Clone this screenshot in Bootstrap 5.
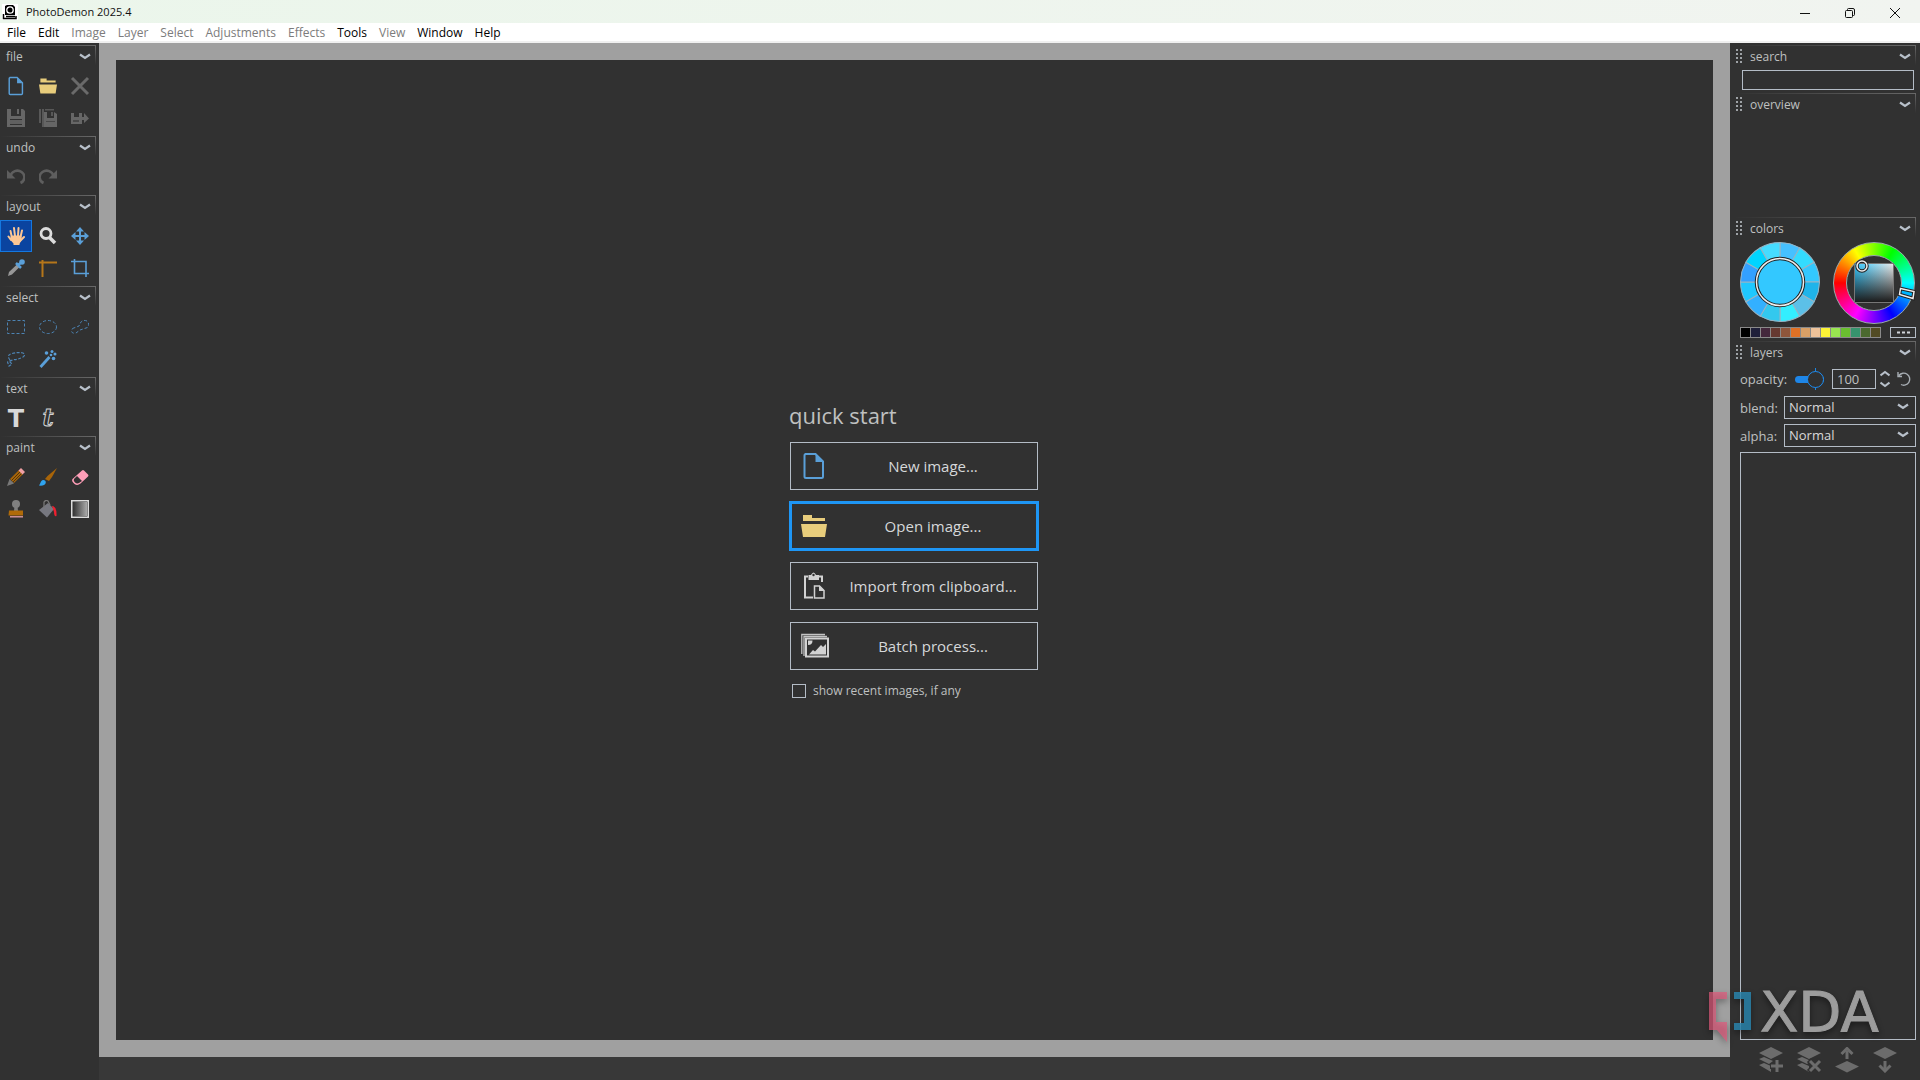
<!DOCTYPE html>
<html lang="en">
<head>
<meta charset="utf-8">
<meta name="viewport" content="width=device-width, initial-scale=1">
<title>PhotoDemon 2025.4</title>
<link rel="stylesheet" href="https://cdn.jsdelivr.net/npm/bootstrap@5.3.0/dist/css/bootstrap.min.css">
<style>
:root { --panel:#313131; --line:#b4bcc6; --txt:#bfc0c0; --accent:#1e96f5; }
body { font-family:"Open Sans","Noto Sans",sans-serif; font-size:12px; line-height:16px; background:#313131; color:var(--txt); overflow:hidden; }
button, input, select { font-family:inherit; color:inherit; }
.titlebar { height:23px; background:linear-gradient(90deg,#ebf6eb,#f1f4f0); color:#111; padding:0 3px 0 2px; font-size:11px; }
.wbtn { width:45px; height:23px; border:0; background:none; padding:0; color:#111; }
.menubar { height:20px; background:#fff; border-bottom:2px solid #f0f0f0; padding-left:1px; }
.menubar a { color:#000; text-decoration:none; padding:0 6px; line-height:19px; }
.menubar a.off { color:#7c7c7c; }
.tools { width:99px; background:var(--panel); padding-top:2px; }
.sect { margin-bottom:2px; }
.head { height:25px; position:relative; padding:4px 5px 0 6px; }
.head::before, .head::after { content:""; position:absolute; top:0; right:0; }
.head::before { left:0; height:1px; background:linear-gradient(90deg,transparent,#686868); }
.head::after { width:1px; height:20px; background:linear-gradient(#686868,transparent); }
.tools .head { margin-right:3px; }
.head h2 { font-size:12px; line-height:16px; margin:0; font-weight:400; }
.fold { border:0; background:none; padding:0; width:12px; height:16px; line-height:0; }
.tool { width:32px; height:32px; border:1px solid transparent; background:none; padding:0; line-height:0; }
.tool.on { background:#0a44a0; border-color:#1478e0; }
.work { background:#a0a0a0; padding:17px; }
.sheet { background:#313131; }
.status { height:23px; background:#383838; }
.side { width:190px; background:var(--panel); padding-top:2px; }
.side .head { margin:0 4px 0 4px; padding-left:2px; }
.side .head h2 { margin-left:8px; }
.inset { margin:0 4px 0 10px; }
.fld { background:transparent; border:1px solid var(--line); border-radius:0; outline:0; padding:0 4px; }
.find { height:20px; margin:0 6px 3px 12px; }
.overview { height:99px; }
.wheels { height:85px; }
.ring { width:82px; height:82px; border-radius:50%; background:conic-gradient(from 270deg,#f00,#ff0,#0f0,#0ff,#00f,#f0f,#f00); border:1px solid #9aa; position:relative; margin-right:1px; }
.hole { width:56px; height:56px; border-radius:50%; background:var(--panel); border:1px solid #9aa; }
.shade { width:40px; height:40px; border:1px solid #777; background:linear-gradient(transparent,#1c1c1c),linear-gradient(90deg,#33c8ff,#e8e8e8); }
.ring svg { position:absolute; inset:-1px; overflow:visible; }
.paletterow { margin-bottom:3px; }
.chips { width:141px; height:11px; background:#8a8a8a; padding:1px; gap:1px; }
.chips button { border:0; padding:0; flex:1; }
.more { width:26px; height:11px; border:1px solid var(--line); background:none; padding:0; }
.lab { font-size:13px; line-height:20px; }
.opac { height:26px; margin-bottom:4px; }
.opac .lab { width:55px; }
.opac input[type=range] { appearance:none; -webkit-appearance:none; width:29px; height:22px; margin:0 8px 0 0; padding:0; background:linear-gradient(#1e86e0,#1e86e0) 20px 0/1px 22px no-repeat; }
.opac input[type=range]::-webkit-slider-runnable-track { height:7px; border-radius:4px; background:#1e86e8; }
.opac input[type=range]::-webkit-slider-thumb { -webkit-appearance:none; width:17px; height:17px; margin-top:-5px; border-radius:50%; background:var(--panel); border:1px solid #1e8cf0; }
.num { width:44px; height:20px; font-size:13px; margin-right:4px; }
.bare { border:0; background:none; padding:0; line-height:0; }
.step { margin-right:7px; }
.pick { width:132px; height:23px; appearance:none; -webkit-appearance:none; font-size:13px; line-height:18px; color:#d8d8d8; padding-bottom:2px; }
.pickwrap { position:relative; }
.pickwrap svg { position:absolute; right:7px; top:6px; pointer-events:none; }
.mode { height:23px; margin-bottom:5px; }
.stack { border:1px solid var(--line); }
.layerbar { height:40px; padding:7px 22px 0 28px; }
.start { width:250px; margin:0 1px 2px 0; }
.start h1 { font-size:22px; line-height:32px; font-weight:400; margin:0 0 11px; color:var(--txt); }
.go { height:48px; border:1px solid var(--line); background:none; color:#d6d8da; font-size:15px; line-height:20px; margin:0 1px 12px; padding:0 0 0 8px; }
.go span { flex:1; }
.go.hot { outline:2px solid var(--accent); outline-offset:-1px; border-color:var(--accent); box-shadow:inset 0 0 0 1px var(--accent); }
.recent { margin:1px 0 0 3px; gap:7px; }
.recent input { appearance:none; -webkit-appearance:none; width:14px; height:14px; border:1px solid var(--line); margin:0; background:none; }
.brand { position:absolute; right:20px; bottom:20px; pointer-events:none; filter:drop-shadow(0 3px 3px rgba(0,0,0,.45)); }
</style>
<script src="https://cdn.jsdelivr.net/npm/bootstrap@5.3.0/dist/js/bootstrap.bundle.min.js"></script>
</head>
<body class="vh-100 d-flex flex-column">
<svg width="0" height="0" class="position-absolute" aria-hidden="true">
 <defs>
  <symbol id="chev" viewBox="0 0 12 8"><path d="M1 1.500 6 5 11 1.500" fill="none" stroke="#b8c0ca" stroke-width="2.200"/></symbol>
  <symbol id="doc" viewBox="0 0 24 28"><path d="M3 2H13.500L21 9.500V24.500Q21 26 19.500 26H4Q2.500 26 2.500 24.500V3.500Q2.500 2 4 2Z" fill="none" stroke="#5a9fd8" stroke-width="2"/><path d="M13.500 2 21.500 10H13.500Z" fill="#5a9fd8"/></symbol>
  <symbol id="fold" viewBox="0 0 26 22"><path d="M2 0H11V3H24V6H2ZM0 9H26L24 22H2Z" fill="#e8cd7c"/></symbol>
  <symbol id="grip" viewBox="0 0 6 14"><path d="M1 0V14M5 0V14" stroke="#9ea2a6" stroke-width="2" stroke-dasharray="2 2"/></symbol>
  <symbol id="sheets" viewBox="0 0 26 26"><path d="M1 6 13 0 25 6 13 12Z" fill="#6c6c6c"/><path d="M1 12 6 10 15 14 11 17ZM1 18 6 16 13 19V25Z" fill="#6c6c6c"/></symbol>
 </defs>
</svg>

<header>
 <div class="titlebar d-flex align-items-center">
  <svg width="16" height="16" viewBox="0 0 16 16"><rect width="16" height="16" fill="#fff"/><path d="M3 2 5 1H11L13 3V11H3Z" fill="#000"/><circle cx="8" cy="6" r="3.200" fill="none" stroke="#fff" stroke-width="1.300"/><path d="M1.500 10V14.500H14V12M4 12.500H13" fill="none" stroke="#000" stroke-width="1.500"/></svg>
  <span class="ms-1 ps-1 flex-grow-1">PhotoDemon 2025.4</span>
  <button class="wbtn" aria-label="Minimize"><svg width="10" height="10"><path d="M0 5.500H10" stroke="#111"/></svg></button>
  <button class="wbtn" aria-label="Restore"><svg width="10" height="10" fill="none" stroke="#111"><rect x=".5" y="2.500" width="7" height="7" rx="1"/><path d="M2.500 2V1.500Q2.500.5 3.500.5H8Q9.500.5 9.500 2V6.500Q9.500 7.500 8.500 7.500H8"/></svg></button>
  <button class="wbtn" aria-label="Close"><svg width="10" height="10"><path d="M0 0 10 10M10 0 0 10" stroke="#111"/></svg></button>
 </div>
 <nav class="menubar d-flex">
  <a href="#">File</a><a href="#">Edit</a><a href="#" class="off">Image</a><a href="#" class="off">Layer</a><a href="#" class="off">Select</a><a href="#" class="off">Adjustments</a><a href="#" class="off">Effects</a><a href="#">Tools</a><a href="#" class="off">View</a><a href="#">Window</a><a href="#">Help</a>
 </nav>
</header>

<div class="d-flex flex-grow-1 position-relative">
 <aside class="tools flex-shrink-0">
  <section class="sect">
   <div class="head d-flex justify-content-between"><h2>file</h2><button class="fold" aria-label="Toggle file"><svg width="12" height="8"><use href="#chev"/></svg></button></div>
   <div class="d-flex flex-wrap">
    <button class="tool" aria-label="New"><svg width="18" height="20"><use href="#doc"/></svg></button>
    <button class="tool" aria-label="Open"><svg width="18" height="16"><use href="#fold"/></svg></button>
    <button class="tool" aria-label="Close image"><svg width="20" height="20"><path d="M2 2 18 18M18 2 2 18" stroke="#6a6a6a" stroke-width="3"/></svg></button>
    <button class="tool" aria-label="Save"><svg width="18" height="18"><path d="M0 0H4V7H14V0H16L18 2V18H0ZM3 10V16H15V10Z" fill="#666" fill-rule="evenodd"/><path d="M3 11H15V15H3Z" fill="#606060"/><path d="M10 0H12V5H10Z" fill="#666"/></svg></button>
    <button class="tool" aria-label="Save copy"><svg width="18" height="18"><path d="M0 0H2V14H0ZM3 0H5V18H3Z" fill="#585858"/><path d="M5 3H8V9H15V3L18 5V18H5Z" fill="#666"/><path d="M7 12H16V13H7Z" fill="#484848"/><path d="M12 3H14V7H12ZM6 0H15V1.500H6Z" fill="#585858"/></svg></button>
    <button class="tool" aria-label="Export"><svg width="18" height="18"><path d="M0 4H3V8H8V4H11V8H13V4L18 9.500 13 14V11H11V15H0Z" fill="#666"/><path d="M2 11H8V13H2Z" fill="#484848"/></svg></button>
   </div>
  </section>
  <section class="sect">
   <div class="head d-flex justify-content-between"><h2>undo</h2><button class="fold" aria-label="Toggle undo"><svg width="12" height="8"><use href="#chev"/></svg></button></div>
   <div class="d-flex flex-wrap">
    <button class="tool" aria-label="Undo"><svg width="18" height="16"><path d="M3.500 7A7 6.500 0 1 1 13.500 14" fill="none" stroke="#5e5e5e" stroke-width="2.600"/><path d="M0 1V9.500H8.500Z" fill="#5e5e5e"/></svg></button>
    <button class="tool" aria-label="Redo"><svg width="18" height="16"><path d="M14.500 7A7 6.500 0 1 0 4.500 14" fill="none" stroke="#5e5e5e" stroke-width="2.600"/><path d="M18 1V9.500H9.500Z" fill="#5e5e5e"/></svg></button>
   </div>
  </section>
  <section class="sect">
   <div class="head d-flex justify-content-between"><h2>layout</h2><button class="fold" aria-label="Toggle layout"><svg width="12" height="8"><use href="#chev"/></svg></button></div>
   <div class="d-flex flex-wrap">
    <button class="tool on" aria-label="Hand"><svg width="18" height="20"><path d="M5 12 3.500 5M8 10 7 2M11 10 11.500 2M13.500 11 15 4.500M4 14 1.500 10.500M13 15 17 11" stroke="#fdc794" stroke-width="2" stroke-linecap="round"/><path d="M4 9.500H14.500V14L12.500 18V19H6.500V17.500L3 13.500Z" fill="#fdc794"/></svg></button>
    <button class="tool" aria-label="Zoom"><svg width="18" height="18"><circle cx="7" cy="6.500" r="5" fill="none" stroke="#dcdcdc" stroke-width="2.800"/><path d="M10.500 10.500 16 16" stroke="#dcdcdc" stroke-width="3.500"/></svg></button>
    <button class="tool" aria-label="Move"><svg width="18" height="18"><path d="M9 2V16M2 9H16" stroke="#5a9fd8" stroke-width="2"/><path d="M9 0 13 4.500H5ZM9 18 13 13.500H5ZM0 9 4.500 5V13ZM18 9 13.500 5V13Z" fill="#5a9fd8"/></svg></button>
    <button class="tool" aria-label="Color picker"><svg width="18" height="18"><path d="M1 17 2 13 10 5.500 12.500 8 5 15.500Z" fill="#979797"/><path d="M9 4 14 9M11 6 15.500 2.500" stroke="#5a9fd8" stroke-width="2.500"/><circle cx="15" cy="3" r="2.800" fill="#5a9fd8"/></svg></button>
    <button class="tool" aria-label="Measure"><svg width="18" height="18"><path d="M0 3.500H18M3.500 1V18" stroke="#b5761a" stroke-width="2"/></svg></button>
    <button class="tool" aria-label="Crop"><svg width="18" height="18" fill="none" stroke="#5a9fd8" stroke-width="1.600"><path d="M3.500 0V14.500H18M0 2.500H15V18"/></svg></button>
   </div>
  </section>
  <section class="sect">
   <div class="head d-flex justify-content-between"><h2>select</h2><button class="fold" aria-label="Toggle select"><svg width="12" height="8"><use href="#chev"/></svg></button></div>
   <div class="d-flex flex-wrap">
    <button class="tool" aria-label="Rectangle"><svg width="18" height="16"><rect x=".5" y="1.500" width="17" height="13" fill="none" stroke="#4d84b4" stroke-dasharray="3 2"/></svg></button>
    <button class="tool" aria-label="Ellipse"><svg width="18" height="16"><ellipse cx="9" cy="8" rx="8.500" ry="6.500" fill="none" stroke="#4d84b4" stroke-dasharray="3 2"/></svg></button>
    <button class="tool" aria-label="Polygon"><svg width="18" height="16"><path d="M1.500 9.500 8 7 10 3Q12 .5 16 2 19 5 16.500 8.500L9 11 5 14Q1 15 .5 12Z" fill="none" stroke="#4d84b4" stroke-dasharray="3 2"/></svg></button>
    <button class="tool" aria-label="Lasso"><svg width="18" height="16"><path d="M3 9Q-1 4 5 2.500T16 2Q19 4 16 6 10 9 7 8.500L2 10 5 13 2 15 .5 11 6 9" fill="none" stroke="#4d84b4" stroke-width="1.200" stroke-dasharray="3 1.500"/></svg></button>
    <button class="tool" aria-label="Wand"><svg width="18" height="18"><path d="M1.500 17 10.500 7" stroke="#5a9fd8" stroke-width="2.800"/><g fill="#5a9fd8"><circle cx="7.500" cy="3" r="1.800"/><circle cx="13" cy="1.500" r="1.500"/><circle cx="12" cy="5" r="1.300"/><circle cx="16" cy="4" r="1.500"/><circle cx="14.500" cy="8.500" r="1.800"/></g></svg></button>
   </div>
  </section>
  <section class="sect">
   <div class="head d-flex justify-content-between"><h2>text</h2><button class="fold" aria-label="Toggle text"><svg width="12" height="8"><use href="#chev"/></svg></button></div>
   <div class="d-flex flex-wrap">
    <button class="tool" aria-label="Basic text"><svg width="30" height="30"><text x="15" y="24" text-anchor="middle" font-family="DejaVu Sans" font-weight="700" font-size="24" fill="#d8d8d8">T</text></svg></button>
    <button class="tool" aria-label="Typography"><svg width="30" height="30"><text x="15" y="23" text-anchor="middle" font-family="DejaVu Serif" font-style="italic" font-weight="700" font-size="24" fill="#313131" stroke="#d0d0d0">t</text></svg></button>
   </div>
  </section>
  <section class="sect">
   <div class="head d-flex justify-content-between"><h2>paint</h2><button class="fold" aria-label="Toggle paint"><svg width="12" height="8"><use href="#chev"/></svg></button></div>
   <div class="d-flex flex-wrap">
    <button class="tool" aria-label="Pencil"><svg width="18" height="18"><path d="M3 11 12 2 16 6 7 15Z" fill="#a86408"/><path d="M4.500 12.500 13 4M6 14 15 5" stroke="#3a2a10" stroke-width=".8"/><path d="M0 18 2.500 11 7 15.500Z" fill="#777"/><path d="M11.500 2.500 14 0 18 4 15.500 6.500Z" fill="#f0a0a4"/></svg></button>
    <button class="tool" aria-label="Brush"><svg width="18" height="18"><path d="M18 0 13 9 10 13 6 11 8.500 8Z" fill="#a86408"/><path d="M0 17.500Q1 16 2 13.500 4 11 6.500 13 7.500 15.500 5 17 3 18 0 17.500Z" fill="#2fa4f0"/></svg></button>
    <button class="tool" aria-label="Eraser"><svg width="18" height="18"><path d="M11 2.500Q12 1.500 13 2.500L17 6.500Q18 7.500 17 8.500L9.500 15.500Q6.500 18 3.500 16 0 13 1.500 11Z" fill="#ff9eb8"/><path d="M6 8 11 13 8 15Q6 16 4 14.500 2 12.500 3 11Z" fill="#313131"/></svg></button>
    <button class="tool" aria-label="Clone"><svg width="18" height="18"><circle cx="9" cy="4" r="4" fill="#808080"/><path d="M7.500 6H10.500L11 11H7Z" fill="#808080"/><path d="M2 10.500H16V15.500H1.500Z" fill="#b06a08"/><path d="M3 16.800H16" stroke="#e8a0a8" stroke-width="1.300"/></svg></button>
    <button class="tool" aria-label="Fill"><svg width="18" height="18"><path d="M0 10 9 3 15 9 8 17.500Z" fill="#777880"/><path d="M5 8V2Q6.500-.5 9 1L11 5" fill="none" stroke="#777" stroke-width="1.300"/><path d="M13 6Q18 6.500 17.500 16 15 17 15 12Z" fill="#ee2030"/></svg></button>
    <button class="tool" aria-label="Gradient"><svg width="18" height="18"><defs><linearGradient id="gr"><stop stop-color="#333"/><stop offset="1" stop-color="#aaa"/></linearGradient></defs><rect x=".75" y=".75" width="16.500" height="16.500" fill="#313131" stroke="#dcdcdc" stroke-width="1.500"/><rect x="2" y="2" width="14" height="14" fill="url(#gr)"/></svg></button>
   </div>
  </section>
 </aside>

 <div class="flex-grow-1 d-flex flex-column">
  <main class="work flex-grow-1 d-flex">
   <div class="sheet flex-grow-1 d-flex align-items-center justify-content-center">
    <div class="start d-flex flex-column">
     <h1>quick start</h1>
     <button class="go d-flex align-items-center"><svg width="30" height="28" viewBox="-3 0 30 28"><use href="#doc" width="24" height="28"/></svg><span>New image...</span></button>
     <button class="go hot d-flex align-items-center"><svg width="30" height="22" viewBox="-2 0 30 22"><use href="#fold" width="26" height="22"/></svg><span>Open image...</span></button>
     <button class="go d-flex align-items-center"><svg width="30" height="28" viewBox="-3 0 30 28"><path d="M11 25.500H3V4.500H6M17 4.500H20V10" fill="none" stroke="#d2d2d2" stroke-width="2"/><path d="M6.500 3H9Q11.500-2 14 3H17V8H6.500Z" fill="#d2d2d2"/><circle cx="11.500" cy="3" r="1.200" fill="#313131"/><path d="M12.500 14H17.500L22 18.500V26H12.500Z" fill="#313131" stroke="#d2d2d2" stroke-width="1.500"/><path d="M17 13.500 22.500 19H17Z" fill="#d2d2d2"/></svg><span>Import from clipboard...</span></button>
     <button class="go d-flex align-items-center"><svg width="30" height="28" viewBox="-2 0 30 28"><path d="M.8 22V2.500H24M3 24V4.500H26" fill="none" stroke="#c4c4c4" stroke-width="1.300"/><rect x="5" y="6.500" width="22" height="18" fill="#313131" stroke="#d2d2d2" stroke-width="2"/><path d="M8 22.500 12 18 14 19.500 20 13 22 15 25 12V22.500Z" fill="#d2d2d2"/><path d="M7 8.500H11.500Q11.500 13 7 13Z" fill="#d2d2d2"/></svg><span>Batch process...</span></button>
     <label class="recent d-flex align-items-center"><input type="checkbox">show recent images, if any</label>
    </div>
   </div>
  </main>
  <footer class="status"></footer>
 </div>

 <aside class="side flex-shrink-0 d-flex flex-column">
  <div class="head d-flex"><svg width="6" height="14"><use href="#grip"/></svg><h2 class="flex-grow-1">search</h2><button class="fold" aria-label="Toggle search"><svg width="12" height="8"><use href="#chev"/></svg></button></div>
  <input class="fld find" type="text" aria-label="search">
  <div class="head d-flex"><svg width="6" height="14"><use href="#grip"/></svg><h2 class="flex-grow-1">overview</h2><button class="fold" aria-label="Toggle overview"><svg width="12" height="8"><use href="#chev"/></svg></button></div>
  <div class="overview"></div>
  <div class="head d-flex"><svg width="6" height="14"><use href="#grip"/></svg><h2 class="flex-grow-1">colors</h2><button class="fold" aria-label="Toggle colors"><svg width="12" height="8"><use href="#chev"/></svg></button></div>
  <div class="inset wheels d-flex justify-content-between align-items-start">
   <svg width="80" height="80" viewBox="-40 -40 80 80" class="flex-shrink-0">
    <defs><path id="wedge" d="M0 0V-39.500A39.500 39.500 0 0 1 19.750-34.200Z" stroke="#98b4c4"/></defs>
    <use href="#wedge" fill="#46c0ff"/><use href="#wedge" fill="#33dcff" transform="rotate(30)"/><use href="#wedge" fill="#33c8ff" transform="rotate(60)"/><use href="#wedge" fill="#1fb4ea" transform="rotate(90)"/><use href="#wedge" fill="#5cc0e8" transform="rotate(120)"/><use href="#wedge" fill="#33eeff" transform="rotate(150)"/><use href="#wedge" fill="#33c8ee" transform="rotate(180)"/><use href="#wedge" fill="#33b0ff" transform="rotate(210)"/><use href="#wedge" fill="#1fc8ff" transform="rotate(240)"/><use href="#wedge" fill="#33a0ff" transform="rotate(270)"/><use href="#wedge" fill="#00d4ff" transform="rotate(300)"/><use href="#wedge" fill="#46dcff" transform="rotate(330)"/>
    <circle r="23.500" fill="#33c8ff" stroke="#222" stroke-width="3.500"/><circle r="23.500" fill="none" stroke="#eee" stroke-width="1.500"/>
   </svg>
   <div class="ring d-flex align-items-center justify-content-center flex-shrink-0">
    <div class="hole d-flex align-items-center justify-content-center"><div class="shade"></div></div>
    <svg width="82" height="82"><circle cx="29" cy="24" r="5" fill="none" stroke="#222" stroke-width="3.500"/><circle cx="29" cy="24" r="5" fill="none" stroke="#eee" stroke-width="1.500"/><path d="M67.500 46.500 81 49.500 80 56.500 66.500 52.500Z" fill="none" stroke="#222" stroke-width="3.500"/><path d="M67.500 46.500 81 49.500 80 56.500 66.500 52.500Z" fill="none" stroke="#eee" stroke-width="1.500"/></svg>
   </div>
  </div>
  <div class="inset paletterow d-flex justify-content-between">
   <div class="chips d-flex" id="chips"></div>
   <button class="more d-flex align-items-center justify-content-center" aria-label="More palettes"><svg width="13" height="3"><path d="M0 1.500H3M5 1.500H8M10 1.500H13" stroke="#d0d4da" stroke-width="2"/></svg></button>
  </div>
  <div class="head d-flex"><svg width="6" height="14"><use href="#grip"/></svg><h2 class="flex-grow-1">layers</h2><button class="fold" aria-label="Toggle layers"><svg width="12" height="8"><use href="#chev"/></svg></button></div>
  <div class="inset opac d-flex align-items-center">
   <label class="lab" for="op">opacity:</label>
   <input type="range" id="op" min="0" max="100" value="100">
   <input class="fld num" type="text" value="100" aria-label="Opacity value">
   <button class="bare step" aria-label="Step"><svg width="10" height="18" fill="none" stroke="#b8c0ca" stroke-width="2"><path d="M.5 5.500 5 2 9.500 5.500M.5 12.500 5 16 9.500 12.500"/></svg></button>
   <button class="bare" aria-label="Reset"><svg width="14" height="16" fill="none" stroke="#a8aeb4" stroke-width="1.400"><path d="M2 4.500A6 6 0 1 1 4 13.500M1 1V5.500H5"/></svg></button>
  </div>
  <div class="inset mode d-flex align-items-center justify-content-between"><label class="lab" for="bl">blend:</label><div class="pickwrap"><select class="fld pick" id="bl"><option>Normal</option></select><svg width="12" height="10" viewBox="0 0 12 8"><use href="#chev"/></svg></div></div>
  <div class="inset mode d-flex align-items-center justify-content-between"><label class="lab" for="al">alpha:</label><div class="pickwrap"><select class="fld pick" id="al"><option>Normal</option></select><svg width="12" height="10" viewBox="0 0 12 8"><use href="#chev"/></svg></div></div>
  <div class="inset stack flex-grow-1"></div>
  <div class="layerbar d-flex justify-content-between align-items-start">
   <button class="bare" aria-label="Add layer"><svg width="26" height="26"><use href="#sheets"/><path d="M19 12V26M12 19H26" stroke="#313131" stroke-width="6"/><path d="M19 13V25M13 19H25" stroke="#6c6c6c" stroke-width="3"/></svg></button>
   <button class="bare" aria-label="Delete layer"><svg width="26" height="26"><use href="#sheets"/><path d="M13 13 25 25M25 13 13 25" stroke="#313131" stroke-width="6"/><path d="M14 14 24 24M24 14 14 24" stroke="#6c6c6c" stroke-width="3"/></svg></button>
   <button class="bare" aria-label="Raise layer"><svg width="26" height="26"><path d="M1 19.500 13 14 25 19.500 13 25.500ZM11.500 4H14.500V12H11.500Z" fill="#6c6c6c"/><path d="M7.500 7 13 1.500 18.500 7" fill="none" stroke="#6c6c6c" stroke-width="3"/></svg></button>
   <button class="bare" aria-label="Lower layer"><svg width="26" height="26"><path d="M1 6 13 0 25 6 13 12ZM11.500 14H14.500V23H11.500Z" fill="#6c6c6c"/><path d="M7.500 18.500 13 24 18.500 18.500" fill="none" stroke="#6c6c6c" stroke-width="3"/></svg></button>
  </div>
 </aside>

 <svg class="brand" width="192" height="84" viewBox="0 -14 192 84" aria-label="XDA">
  <path d="M1 2H19V9H8V32H19V52L9 40H1Z" fill="#e0587a" opacity=".7"/>
  <path d="M26 2H43V40H26V33H36V9H26Z" fill="#2a86b0" opacity=".82"/>
  <text x="52" y="41" font-family="DejaVu Sans" font-size="56" fill="#9c9c9c" stroke="#9c9c9c">XDA</text>
 </svg>
</div>
<script>
["#000","#20203a","#44283c","#663931","#8f563b","#df7126","#d9a066","#eec39a","#fbf236","#99e550","#6abe30","#37946e","#4b692f","#524b24"].forEach(function (c) {
  var b = document.createElement("button");
  b.style.background = c;
  b.setAttribute("aria-label", c);
  document.getElementById("chips").appendChild(b);
});
</script>
</body>
</html>
